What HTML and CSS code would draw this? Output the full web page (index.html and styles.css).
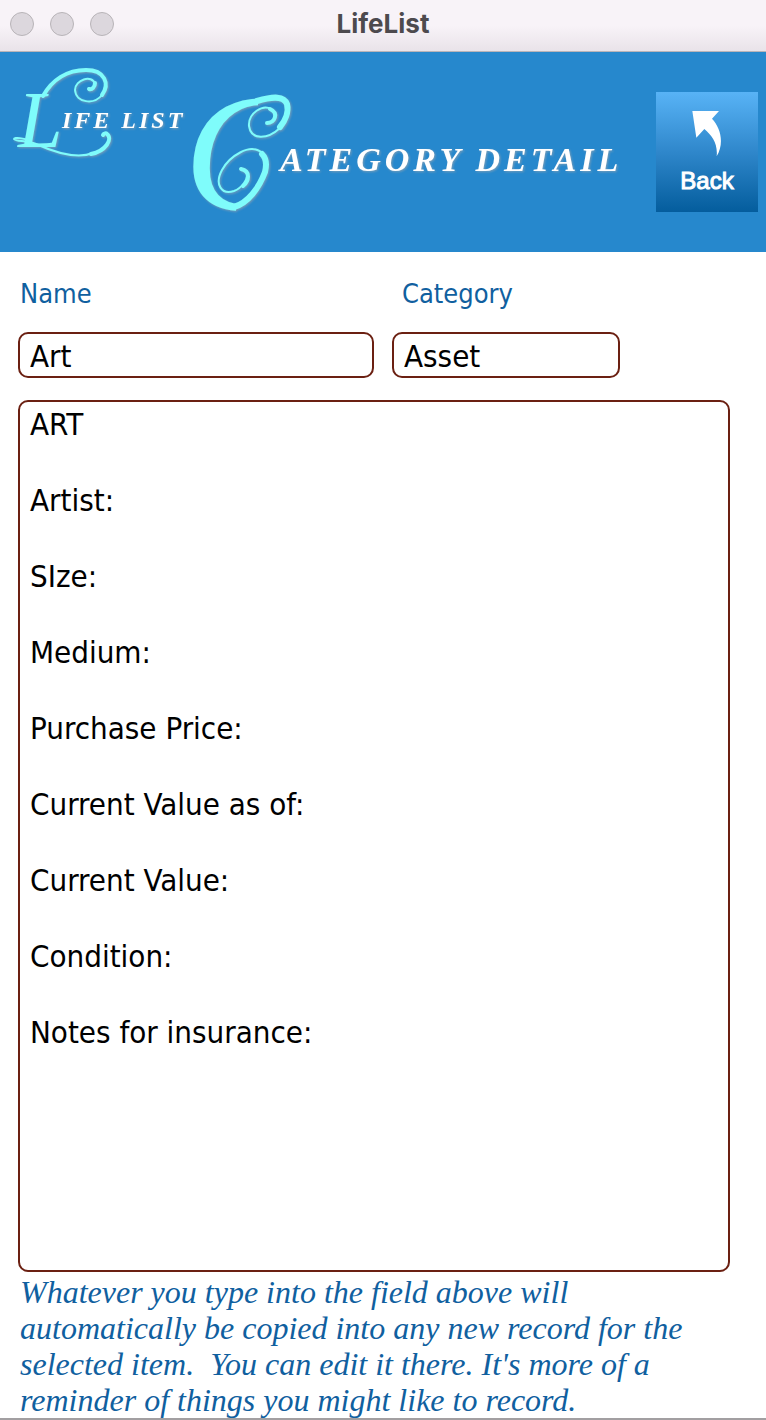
FILE: index.html
```html
<!DOCTYPE html>
<html lang="en">
<head>
<meta charset="utf-8">
<meta name="viewport" content="width=device-width, initial-scale=1">
<title>LifeList</title>
<link rel="stylesheet" href="styles.css">
</head>
<body>
<div class="window">
  <div class="titlebar">
    <div class="lights">
      <button class="light" type="button" aria-label="Close"></button>
      <button class="light" type="button" aria-label="Minimize"></button>
      <button class="light" type="button" aria-label="Zoom"></button>
    </div>
    <div class="title">LifeList</div>
    <div></div>
  </div>
  <header class="banner">
    <h1 class="brand">
      <svg class="wordmark" viewBox="0 0 630 160" width="630" height="160">
        <defs>
          <clipPath id="trim-c"><path d="M180 20H258V100H236V170H180Z"/></clipPath>
        </defs>
        <g class="initials">
          <text class="initial-l" x="18" y="87">L</text>
          <text class="initial-c" x="184" y="149" clip-path="url(#trim-c)">C</text>
        </g>
        <g class="flourish">
          <path class="thick" d="M43 36C52 20 67 10 86 10C105 10 110 24 102 35"/>
          <path d="M102 35C94 45 76 43 75 30C75 20 92 14 95 24"/>
          <path class="thick" d="M95 23C95 27 92 30 89 29"/>
          <path d="M30 81C24 78 14 77 14 79C16 82 26 80 36 84C56 93 78 99 93 93"/>
          <path class="thick" d="M91 94C106 91 113 79 107 74C106 73 104 73 103 75"/>
          <path class="heavy" d="M257 41C274 36 284 36 287 44C289 52 285 61 280 67"/>
          <path d="M280 68C267 80 251 80 249 66C248 53 263 44 271 49"/>
          <path class="thick" d="M270 49C279 53 275 63 267 63"/>
          <path class="heavy" d="M234 147C248 143 259 128 265 112C267 104 266 98 262 94"/>
          <path d="M262 93C250 82 229 97 222 110C214 125 222 135 234 131C242 128 248 119 247 114"/>
          <path class="thick" d="M241 109C251 111 249 121 243 126"/>
        </g>
        <text class="caps-small" x="62" y="68">IFE LIST</text>
        <text class="caps-large" x="280" y="111">ATEGORY DETAIL</text>
      </svg>
    </h1>
    <button class="back" type="button">
      <svg class="arrow" viewBox="150 330 96 141" width="32" height="47" aria-hidden="true">
        <path d="M154 333H234L213 356C240 385 250 430 227 469C231 430 213 407 190 387L166 413Z"/>
      </svg>
      <span>Back</span>
    </button>
  </header>
  <main class="form">
    <div class="fields">
      <div class="field">
        <label for="name">Name</label>
        <input id="name" type="text" value="Art">
      </div>
      <div class="field">
        <label for="category">Category</label>
        <input id="category" type="text" value="Asset">
      </div>
    </div>
    <textarea class="template" aria-label="Category template" aria-describedby="hint">ART

Artist:

SIze:

Medium:

Purchase Price:

Current Value as of:

Current Value:

Condition:

Notes for insurance:</textarea>
    <p class="hint" id="hint">Whatever you type into the field above will automatically be copied into any new record for the selected item.&nbsp; You can edit it there. It's more of a reminder of things you might like to record.</p>
  </main>
</div>
</body>
</html>
```
FILE: styles.css
```css
* {
  box-sizing: border-box;
}

body {
  margin: 0;
  background: #fff;
  font-family: "DejaVu Sans Condensed", "DejaVu Sans", sans-serif;
}

.window {
  display: flex;
  flex-direction: column;
  min-height: 100vh;
  border-bottom: 2px solid #a29fa1;
}

.titlebar {
  display: grid;
  grid-template-columns: 1fr auto 1fr;
  align-items: center;
  height: 52px;
  padding: 0 10px 4px;
  background: linear-gradient(#f8f3f8 50%, #e9e3e9);
  border-bottom: 1px solid #b9b4b9;
}

.lights {
  display: flex;
  gap: 16px;
}

.light {
  width: 24px;
  height: 24px;
  padding: 0;
  border: 1px solid #b8b4b8;
  border-radius: 50%;
  background: #dcd7dd;
}

.title {
  color: #4d4a4e;
  font: 700 26px/28px Inter, sans-serif;
}

.banner {
  display: flex;
  justify-content: space-between;
  align-items: flex-start;
  height: 200px;
  padding: 0 8px 0 0;
  background: #2688cd;
}

.brand {
  flex: 0 1 630px;
  margin: 8px 0 0;
}

.wordmark {
  display: block;
  width: 100%;
  height: auto;
  overflow: visible;
  font-family: "Liberation Serif", serif;
  font-style: italic;
  filter: drop-shadow(1px 1px 1px #789db8);
}

.initials {
  fill: #7ffcfb;
  font-weight: 400;
}

.initial-l {
  font-size: 80px;
}

.initial-c {
  font-size: 168px;
}

.flourish {
  fill: none;
  stroke: #7ffcfb;
  stroke-width: 2;
  stroke-linecap: round;
}

.thick {
  stroke-width: 4;
}

.heavy {
  stroke-width: 6;
}

.caps-small,
.caps-large {
  fill: #fff;
  font-weight: 700;
}

.caps-small {
  font-size: 24px;
  letter-spacing: 3px;
}

.caps-large {
  font-size: 34px;
  letter-spacing: 4px;
}

.back {
  display: flex;
  flex-direction: column;
  align-items: center;
  gap: 8px;
  width: 102px;
  height: 120px;
  margin: 40px 0 0;
  padding: 18px 0 0;
  border: 0;
  background: linear-gradient(#58b3f6, #2f87cb 50%, #045d9d);
  color: #fff;
  font: 24px/32px "Liberation Sans", sans-serif;
  -webkit-text-stroke: 1px #fff;
}

.arrow {
  fill: #fff;
}

.form {
  display: flex;
  flex: 1;
  flex-direction: column;
  padding: 24px 36px 0 18px;
}

.fields {
  display: grid;
  grid-template-columns: 50% 32%;
  gap: 18px;
}

.field {
  display: flex;
  flex-direction: column;
  gap: 20px;
}

.field label {
  padding-left: 2px;
  color: #10609f;
  font-size: 27px;
  line-height: 36px;
}

.field + .field label {
  padding-left: 10px;
}

.field input,
.template {
  width: 100%;
  border: 2px solid #6b2012;
  border-radius: 10px;
  background: #fff;
  color: #000;
  font-family: inherit;
  font-size: 31px;
}

.field input {
  height: 46px;
  padding: 2px 10px 0;
}

.template {
  display: block;
  flex: 1;
  min-height: 720px;
  margin-top: 22px;
  padding: 3px 10px;
  line-height: 38px;
  resize: none;
}

.hint {
  margin: 2px 0 0;
  padding: 0 0 0 2px;
  color: #10609f;
  font: italic 32px/36px "Liberation Serif", serif;
}
```
